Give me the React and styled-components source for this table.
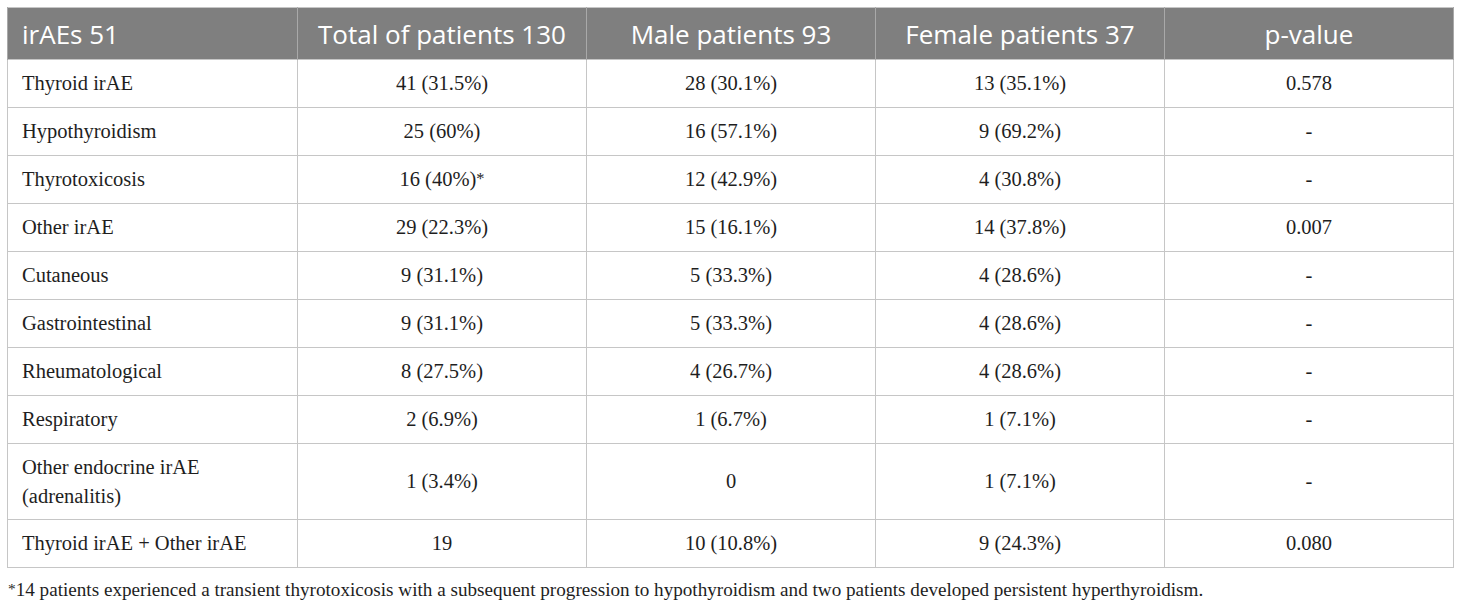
import React from "react";
import styled, { createGlobalStyle } from "styled-components";

const Global = createGlobalStyle`
  html, body { margin: 0; padding: 0; background: #ffffff; }
`;

const Page = styled.div`
  padding: 7px 7px 0 7px;
  width: 1446px;
`;

const Table = styled.table`
  width: 1446px;
  border-collapse: collapse;
  table-layout: fixed;
  border: 1px solid #c6c6c6;
`;

const Col = styled.col`
  width: ${(p) => (p.$first ? "290px" : "289px")};
`;

const HeadCell = styled.th`
  background: #7f7f7f;
  color: #ffffff;
  font-family: "Open Sans", "Noto Sans", sans-serif;
  font-weight: 400;
  font-size: 26px;
  height: 51px;
  padding: 0 14px;
  text-align: ${(p) => (p.$left ? "left" : "center")};
  border-left: 1px solid #a9a9a9;
  border-right: 1px solid #a9a9a9;
  white-space: nowrap;
`;

const Cell = styled.td`
  font-family: "Liberation Serif", "Times New Roman", serif;
  font-size: 20.5px;
  color: #1e1e1e;
  line-height: 29px;
  height: ${(p) => (p.$tall ? "75px" : "47px")};
  padding: 0 14px;
  text-align: ${(p) => (p.$left ? "left" : "center")};
  border: 1px solid #c6c6c6;
  vertical-align: middle;
`;

const Footnote = styled.p`
  margin: 9px 0 0 1px;
  font-family: "Liberation Serif", "Times New Roman", serif;
  font-size: 19.15px;
  color: #1e1e1e;
  line-height: 24px;
`;

const Sup = styled.span`
  font-size: 0.8em;
  vertical-align: 0.15em;
`;

const headers = [
  "irAEs 51",
  "Total of patients 130",
  "Male patients 93",
  "Female patients 37",
  "p-value",
];

const rows = [
  ["Thyroid irAE", "41 (31.5%)", "28 (30.1%)", "13 (35.1%)", "0.578"],
  ["Hypothyroidism", "25 (60%)", "16 (57.1%)", "9 (69.2%)", "-"],
  ["Thyrotoxicosis", "16 (40%)*", "12 (42.9%)", "4 (30.8%)", "-"],
  ["Other irAE", "29 (22.3%)", "15 (16.1%)", "14 (37.8%)", "0.007"],
  ["Cutaneous", "9 (31.1%)", "5 (33.3%)", "4 (28.6%)", "-"],
  ["Gastrointestinal", "9 (31.1%)", "5 (33.3%)", "4 (28.6%)", "-"],
  ["Rheumatological", "8 (27.5%)", "4 (26.7%)", "4 (28.6%)", "-"],
  ["Respiratory", "2 (6.9%)", "1 (6.7%)", "1 (7.1%)", "-"],
  ["Other endocrine irAE\n(adrenalitis)", "1 (3.4%)", "0", "1 (7.1%)", "-"],
  ["Thyroid irAE + Other irAE", "19", "10 (10.8%)", "9 (24.3%)", "0.080"],
];

function renderText(t) {
  if (t.includes("\n")) {
    const parts = t.split("\n");
    return parts.map((p, i) => (
      <React.Fragment key={i}>
        {p}
        {i < parts.length - 1 && <br />}
      </React.Fragment>
    ));
  }
  if (t.endsWith("*")) {
    return (
      <>
        {t.slice(0, -1)}
        <Sup>*</Sup>
      </>
    );
  }
  return t;
}

export default function App() {
  return (
    <Page>
      <Global />
      <Table>
        <colgroup>
          {headers.map((h, i) => (
            <Col key={h} $first={i === 0} />
          ))}
        </colgroup>
        <thead>
          <tr>
            {headers.map((h, i) => (
              <HeadCell key={h} $left={i === 0}>
                {h}
              </HeadCell>
            ))}
          </tr>
        </thead>
        <tbody>
          {rows.map((r) => (
            <tr key={r[0]}>
              {r.map((c, i) => (
                <Cell key={i} $left={i === 0} $tall={r[0].includes("\n")}>
                  {renderText(c)}
                </Cell>
              ))}
            </tr>
          ))}
        </tbody>
      </Table>
      <Footnote>
        <Sup>*</Sup>14 patients experienced a transient thyrotoxicosis with a
        subsequent progression to hypothyroidism and two patients developed
        persistent hyperthyroidism.
      </Footnote>
    </Page>
  );
}
